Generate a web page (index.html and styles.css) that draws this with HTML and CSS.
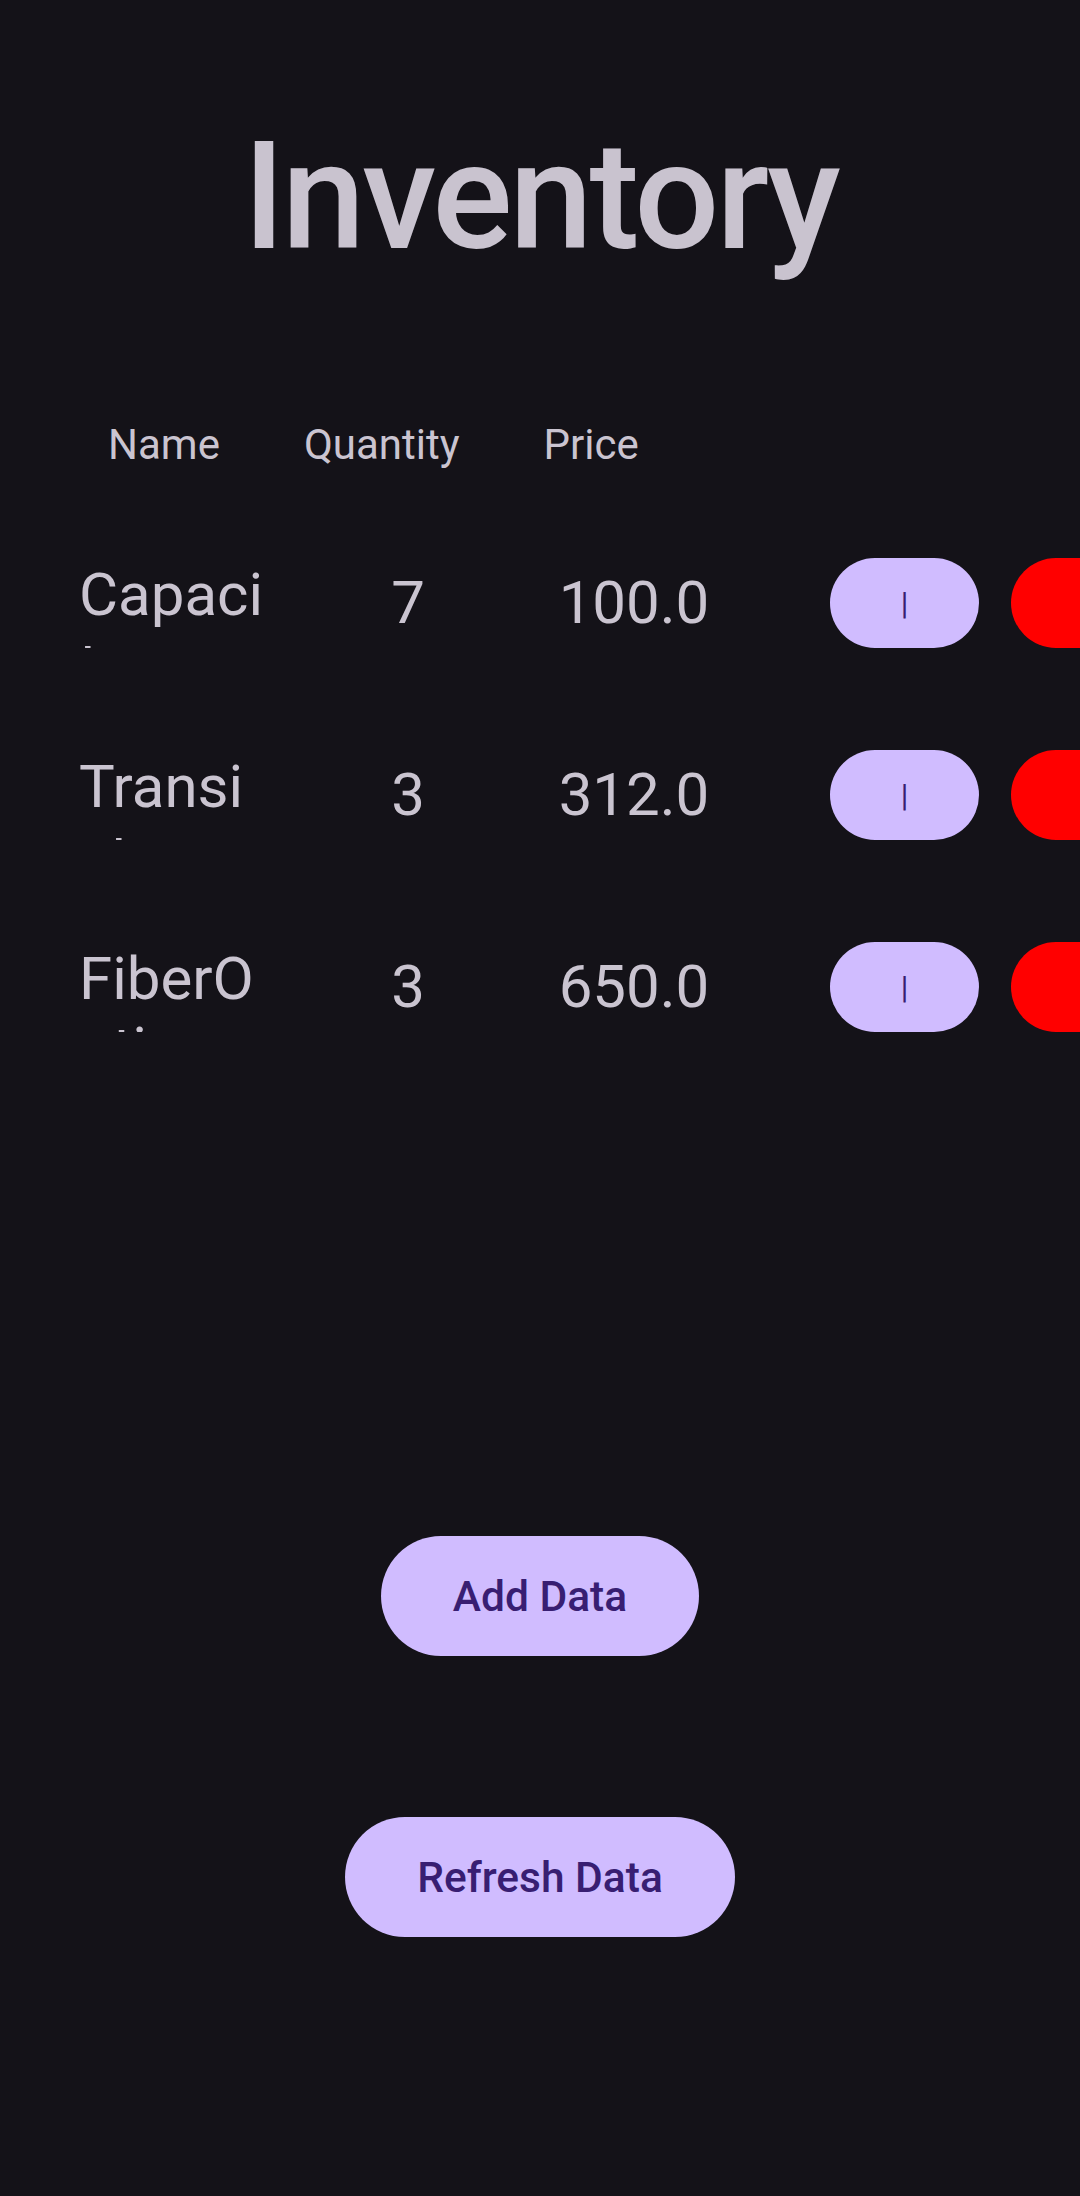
FILE: index.html
```html
<!DOCTYPE html>
<html lang="en">
<head>
<meta charset="utf-8">
<title>Inventory</title>
<link rel="stylesheet" href="styles.css">
</head>
<body>
<main class="screen">
  <h1 class="title">Inventory</h1>
  <div class="table-head">
    <span class="head-cell">Name</span>
    <span class="head-cell">Quantity</span>
    <span class="head-cell">Price</span>
  </div>
  <div class="rows">
    <div class="row">
      <div class="name">Capacitor</div>
      <div class="qty">7</div>
      <div class="price">100.0</div>
      <button class="btn-edit"><span class="btn-edit-label">|</span></button>
      <button class="btn-delete"></button>
    </div>
    <div class="row">
      <div class="name">Transistor</div>
      <div class="qty">3</div>
      <div class="price">312.0</div>
      <button class="btn-edit"><span class="btn-edit-label">|</span></button>
      <button class="btn-delete"></button>
    </div>
    <div class="row">
      <div class="name">FiberOptic</div>
      <div class="qty">3</div>
      <div class="price">650.0</div>
      <button class="btn-edit"><span class="btn-edit-label">|</span></button>
      <button class="btn-delete"></button>
    </div>
  </div>
  <div class="actions">
    <button class="btn-primary">Add Data</button>
    <button class="btn-primary">Refresh Data</button>
  </div>
</main>
</body>
</html>
```
FILE: styles.css
```css
html, body {
  margin: 0;
  padding: 0;
  background: #141218;
}
body {
  width: 1080px;
  height: 2196px;
  overflow: hidden;
  font-family: Roboto, "Noto Sans", "Liberation Sans", sans-serif;
  color: #cac4d0;
}
.screen {
  display: flex;
  flex-direction: column;
  padding-top: 109px;
}
.title {
  margin: 0;
  font-size: 150px;
  line-height: 176px;
  font-weight: 500;
  letter-spacing: -3.3px;
  text-align: center;
  color: #c9c3cf;
}
.table-head {
  display: flex;
  gap: 84px;
  padding-left: 108px;
  margin-top: 135px;
  font-size: 42px;
  line-height: 50px;
}
.rows {
  display: flex;
  flex-direction: column;
  gap: 102px;
  margin-top: 88px;
}
.row {
  display: flex;
  align-items: center;
  height: 90px;
  padding-left: 79px;
  font-size: 60px;
  line-height: 70px;
}
.name {
  flex: 0 0 191px;
  align-self: stretch;
  box-sizing: border-box;
  padding-top: 1.5px;
  line-height: 70.5px;
  overflow: hidden;
  word-break: break-all;
}
.qty {
  flex: 0 0 276px;
  text-align: center;
}
.price {
  flex: 0 0 176px;
  text-align: center;
}
.btn-edit, .btn-delete {
  flex: 0 0 149px;
  height: 90px;
  border: none;
  border-radius: 45px;
  padding: 0;
  display: flex;
  align-items: center;
  justify-content: center;
}
.btn-edit {
  margin-left: 108px;
  background: #d0bcff;
}
.btn-edit-label {
  font-family: Roboto, sans-serif;
  font-size: 31px;
  line-height: 1;
  color: #381e72;
}
.btn-delete {
  margin-left: 32px;
  background: #ff0000;
}
.actions {
  display: flex;
  flex-direction: column;
  align-items: center;
  gap: 161px;
  margin-top: 504px;
}
.btn-primary {
  height: 120px;
  padding: 0 72px;
  border: none;
  border-radius: 60px;
  background: #d0bcff;
  color: #381e72;
  font-family: Roboto, sans-serif;
  font-weight: 500;
  font-size: 42.5px;
}
```
